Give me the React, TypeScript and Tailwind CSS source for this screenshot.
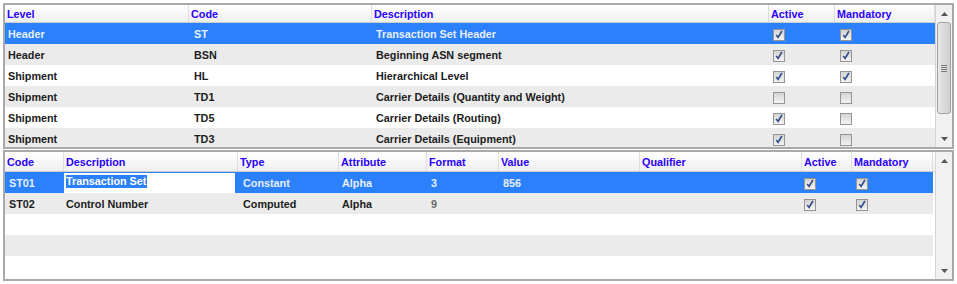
import React from "react";

type Col = { label: string; w: string };

// top table: segments of the ASN
const segCols: Col[] = [
  { label: "Level", w: "w-[184px]" },
  { label: "Code", w: "w-[183px]" },
  { label: "Description", w: "w-[397px]" },
  { label: "Active", w: "w-[66px]" },
  { label: "Mandatory", w: "w-[100px]" },
];

const segments = [
  { level: "Header", code: "ST", desc: "Transaction Set Header", active: true, mandatory: true },
  { level: "Header", code: "BSN", desc: "Beginning ASN segment", active: true, mandatory: true },
  { level: "Shipment", code: "HL", desc: "Hierarchical Level", active: true, mandatory: true },
  { level: "Shipment", code: "TD1", desc: "Carrier Details (Quantity and Weight)", active: false, mandatory: false },
  { level: "Shipment", code: "TD5", desc: "Carrier Details (Routing)", active: true, mandatory: false },
  { level: "Shipment", code: "TD3", desc: "Carrier Details (Equipment)", active: true, mandatory: false },
];

// bottom table: elements of the selected segment
const elemCols: Col[] = [
  { label: "Code", w: "w-[59px]" },
  { label: "Description", w: "w-[174px]" },
  { label: "Type", w: "w-[101px]" },
  { label: "Attribute", w: "w-[88px]" },
  { label: "Format", w: "w-[72px]" },
  { label: "Value", w: "w-[141px]" },
  { label: "Qualifier", w: "w-[162px]" },
  { label: "Active", w: "w-[50px]" },
  { label: "Mandatory", w: "w-[81px]" },
];

const elements = [
  { code: "ST01", desc: "Transaction Set", type: "Constant", attr: "Alpha", format: "3", value: "856", qualifier: "", active: true, mandatory: true },
  { code: "ST02", desc: "Control Number", type: "Computed", attr: "Alpha", format: "9", value: "", qualifier: "", active: true, mandatory: true },
];

function rowBg(i: number) {
  if (i === 0) return "bg-[#2b80fb] text-[#e6efff]";
  return i % 2 === 1 ? "bg-[#ebebeb] text-[#1c1c1c]" : "bg-white text-[#1c1c1c]";
}

function Check({ on }: { on: boolean }) {
  return (
    <span className="flex h-[12px] w-[12px] items-center justify-center border border-[#959595] bg-gradient-to-b from-[#d4d4d4] to-[#f3f3f3]">
      {on && (
        <svg width="8" height="9" viewBox="0 0 8 9">
          <path d="M1.2 5 L3.1 7.4 L6.9 1" fill="none" stroke="#2f4b88" strokeWidth="1.6" />
        </svg>
      )}
    </span>
  );
}

function Arrow({ up }: { up: boolean }) {
  return (
    <svg width="7" height="4" viewBox="0 0 7 4">
      <path d={up ? "M0 4 L3.5 0 L7 4 Z" : "M0 0 L3.5 4 L7 0 Z"} fill="#555" />
    </svg>
  );
}

function ScrollBar({ thumb }: { thumb: boolean }) {
  return (
    <div className="flex w-[17px] flex-col border-l border-[#d4d4d4] bg-[#f1f1f1]">
      <div className="flex h-[17px] items-center justify-center">
        <Arrow up />
      </div>
      <div className="flex-1 px-[1px]">
        {thumb && (
          <div className="flex h-[92px] flex-col items-center justify-center gap-[1px] rounded-[3px] border border-[#a3a3a3] bg-gradient-to-r from-[#e9e9e9] via-[#dadada] to-[#cfcfcf]">
            <span className="h-px w-[6px] bg-[#7a7a7a]" />
            <span className="h-px w-[6px] bg-[#7a7a7a]" />
            <span className="h-px w-[6px] bg-[#7a7a7a]" />
            <span className="h-px w-[6px] bg-[#7a7a7a]" />
          </div>
        )}
      </div>
      <div className="flex h-[17px] items-center justify-center">
        <Arrow up={false} />
      </div>
    </div>
  );
}

function HeaderRow({ cols, h, filler }: { cols: Col[]; h: string; filler?: boolean }) {
  return (
    <div className={`flex ${h} shrink-0 border-b border-[#cdcdcd] bg-gradient-to-b from-white to-[#efefef] text-[#2a00ff]`}>
      {cols.map((c) => (
        <div key={c.label} className={`${c.w} flex shrink-0 items-center border-r border-[#dedede] pl-[2px] pt-[2px]`}>
          {c.label}
        </div>
      ))}
      {filler && <div className="w-[2px] shrink-0" />}
    </div>
  );
}

export default function App() {
  return (
    <div className="h-[284px] w-[957px] bg-white px-[3px] pt-[3px] font-['Liberation_Sans',Arial,sans-serif] text-[10.8px] font-bold">
      {/* segments */}
      <div className="flex h-[146px] w-[951px] border-2 border-[#a9a9a9] bg-white">
        <div className="flex w-[930px] flex-col overflow-hidden">
          <HeaderRow cols={segCols} h="h-[18px]" />
          {segments.map((s, i) => (
            <div key={s.code} className={`flex h-[21px] shrink-0 items-center pt-[2px] ${rowBg(i)}`}>
              <div className="w-[184px] shrink-0 pl-[3px]">{s.level}</div>
              <div className="w-[183px] shrink-0 pl-[5px]">{s.code}</div>
              <div className="w-[397px] shrink-0 pl-[4px]">{s.desc}</div>
              <div className="w-[66px] shrink-0 pl-[4px]">
                <Check on={s.active} />
              </div>
              <div className="w-[100px] shrink-0 pl-[5px]">
                <Check on={s.mandatory} />
              </div>
            </div>
          ))}
        </div>
        <div className="w-[0px] flex-1" />
        <ScrollBar thumb />
      </div>

      {/* elements */}
      <div className="mt-[1px] flex h-[131px] w-[951px] border-2 border-[#a9a9a9] bg-white">
        <div className="flex w-[930px] flex-col overflow-hidden">
          <HeaderRow cols={elemCols} h="h-[20px]" filler />
          {[0, 1, 2, 3, 4].map((i) => {
            const e = elements[i];
            return (
              <div key={i} className={`flex h-[21px] w-[928px] shrink-0 items-center ${e ? "pt-[2px]" : ""} ${rowBg(i)}`}>
                {e && (
                  <>
                    <div className="w-[59px] shrink-0 pl-[4px]">{e.code}</div>
                    <div className="w-[174px] shrink-0 pl-[2px]">
                      {i === 0 ? (
                        <div className="-mt-[2px] -ml-[2px] h-[20px] w-[171px] bg-white pl-[2px]">
                          <span className="inline-block h-[13px] bg-[#2b80fb] pr-[1px] leading-[13px] font-bold text-white">
                            {e.desc}
                          </span>
                        </div>
                      ) : (
                        e.desc
                      )}
                    </div>
                    <div className="w-[101px] shrink-0 pl-[5px]">{e.type}</div>
                    <div className="w-[88px] shrink-0 pl-[3px]">{e.attr}</div>
                    <div className={`w-[72px] shrink-0 pl-[4px] ${i === 0 ? "" : "text-[#6a6a6a]"}`}>{e.format}</div>
                    <div className="w-[141px] shrink-0 pl-[4px]">{e.value}</div>
                    <div className="w-[162px] shrink-0 pl-[3px]">{e.qualifier}</div>
                    <div className="w-[50px] shrink-0 pl-[2px]">
                      <Check on={e.active} />
                    </div>
                    <div className="w-[81px] shrink-0 pl-[4px]">
                      <Check on={e.mandatory} />
                    </div>
                  </>
                )}
              </div>
            );
          })}
        </div>
        <div className="w-[0px] flex-1" />
        <ScrollBar thumb={false} />
      </div>
    </div>
  );
}
